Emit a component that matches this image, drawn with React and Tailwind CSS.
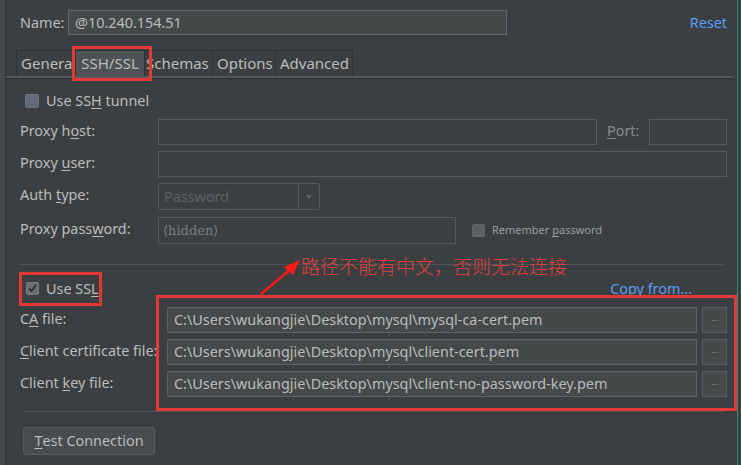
import React from "react";

const font = { fontFamily: '"Noto Sans", "Noto Sans CJK SC", sans-serif' };

const Label = ({ children, w = "w-[138px]" }) => (
  <div className={`${w} shrink-0 text-[14.4px] text-[#bbbbbb] leading-none -mt-[2px]`}>{children}</div>
);

const U = ({ children }) => <span className="underline underline-offset-2">{children}</span>;

const Box = ({ className = "", children }) => (
  <div className={`h-[26px] bg-[#45494a] border border-[#5e6163] flex items-center px-[6px] text-[14.4px] text-[#bbbbbb] ${className}`}>
    {children}
  </div>
);

const EmptyField = ({ className = "" }) => (
  <div className={`h-[26px] border border-[#575a5c] ${className}`} />
);

const FileRow = ({ label, path }) => (
  <div className="flex items-center h-[26px] mt-[6px] first:mt-0">
    <Label>{label}</Label>
    <div className="w-[9px] shrink-0" />
    <Box className="w-[530px]">{path}</Box>
    <div className="ml-[5px] w-[25px] h-[26px] bg-[#45494a] border border-[#55585a] flex items-center justify-center text-[9px] text-[#999] pb-[4px]">
      ...
    </div>
  </div>
);

export default function App() {
  return (
    <div className="w-[741px] h-[465px] bg-[#3c3f41] flex overflow-hidden" style={font}>
      <div className="w-[6px] bg-[#46494b] border-r border-[#2f3133]" />
      <div className="relative flex-1 flex flex-col">
        {/* name row */}
        <div className="mt-[10px] h-[25px] flex items-center pl-[14px] pr-[10px]">
          <div className="w-[48px] text-[14.4px] text-[#bbbbbb]">Name:</div>
          <div className="w-[439px] h-[25px] bg-[#45494a] border border-[#646769] flex items-center px-[6px] text-[14.4px] text-[#bbbbbb]">
            @10.240.154.51
          </div>
          <div className="ml-auto text-[14.4px] text-[#589df6]">Reset</div>
        </div>

        {/* tabs */}
        <div className="mt-[15px] flex pl-[10px] h-[26px]">
          {["Genera", "SSH/SSL", "Schemas", "Options", "Advanced"].map((t, i) => (
            <div
              key={t}
              className={`h-[26px] px-[4px] flex items-center text-[15px] text-[#bbbbbb] border-t border-r border-[#2f3234] ${
                i === 0 ? "border-l w-[60px]" : ""
              } ${i === 1 ? "bg-[#4e5254] w-[69px] justify-center" : ""} ${i === 2 ? "w-[68px] pl-[1px]" : ""} ${
                i === 3 ? "w-[63px]" : ""
              } ${i === 4 ? "w-[77px]" : ""}`}
            >
              {t}
            </div>
          ))}
        </div>
        <div className="h-[2px] bg-[#55585a] mr-[4px]" />
        <div className="h-[1px] bg-[#2c2e30] mr-[4px]" />

        {/* ssh tunnel */}
        <div className="mt-[14px] flex items-center pl-[19px] h-[15px]">
          <div className="w-[14px] h-[14px] rounded-[2px] bg-[#5f6b7a] border border-[#6c737b]" />
          <span className="ml-[7px] text-[14.4px] text-[#bbbbbb]">
            Use SS<U>H</U> tunnel
          </span>
        </div>

        <div className="pl-[14px] pr-[10px]">
          <div className="mt-[11px] flex items-center h-[26px]">
            <Label>
              Proxy h<U>o</U>st:
            </Label>
            <EmptyField className="w-[439px]" />
            <div className="ml-[10px] w-[42px] text-[14.4px] text-[#888b8d] -mt-[2px]">
              <U>P</U>ort:
            </div>
            <EmptyField className="w-[78px]" />
          </div>
          <div className="mt-[6px] flex items-center h-[26px]">
            <Label>
              Proxy <U>u</U>ser:
            </Label>
            <EmptyField className="w-[569px]" />
          </div>
          <div className="mt-[6px] flex items-center h-[27px]">
            <Label>
              Auth <U>t</U>ype:
            </Label>
            <div className="w-[162px] h-[27px] rounded-[3px] border border-[#56595b] flex items-center">
              <div className="flex-1 px-[5px] text-[14.4px] text-[#5c5f61]">Password</div>
              <div className="w-[21px] h-full border-l border-[#56595b] flex items-center justify-center">
                <div className="w-0 h-0 border-l-[3px] border-r-[3px] border-t-[4px] border-l-transparent border-r-transparent border-t-[#5f6264]" />
              </div>
            </div>
          </div>
          <div className="mt-[7px] flex items-center h-[27px]">
            <Label>
              Proxy pass<U>w</U>ord:
            </Label>
            <div
              className="w-[298px] h-[27px] border border-[#56595b] flex items-center px-[4px] text-[13px] text-[#7b7e80]"
              style={{ fontFamily: '"DejaVu Serif", serif' }}
            >
              ⟨hidden⟩
            </div>
            <div className="ml-[16px] w-[13px] h-[13px] rounded-[2px] bg-[#5d6062] border border-[#646769]" />
            <div className="ml-[7px] text-[11px] text-[#9a9d9f]">
              Remember <U>p</U>assword
            </div>
          </div>
        </div>

        {/* separator */}
        <div className="mt-[20px] ml-[13px] mr-[14px] h-[1px] bg-[#505355]" />

        {/* ssl */}
        <div className="mt-[16px] flex items-center pl-[20px] pr-[45px] h-[15px]">
          <div className="w-[13px] h-[13px] rounded-[2px] bg-[#6b6e70] border border-[#7a7d7f] flex items-center justify-center">
            <svg width="11" height="11" viewBox="0 0 11 11">
              <path d="M2 5.5 L4.5 8 L9 2" stroke="#2c2e30" strokeWidth="1.8" fill="none" />
            </svg>
          </div>
          <span className="ml-[7px] text-[14.4px] text-[#bbbbbb]">
            Use SS<U>L</U>
          </span>
          <span className="ml-auto text-[14.4px] text-[#589df6]">Copy from...</span>
        </div>

        <div className="mt-[11px] pl-[14px] flex flex-col">
          <FileRow
            label={
              <>
                C<U>A</U> file:
              </>
            }
            path="C:\Users\wukangjie\Desktop\mysql\mysql-ca-cert.pem"
          />
          <FileRow
            label={
              <>
                <U>C</U>lient certificate file:
              </>
            }
            path="C:\Users\wukangjie\Desktop\mysql\client-cert.pem"
          />
          <FileRow
            label={
              <>
                Client <U>k</U>ey file:
              </>
            }
            path="C:\Users\wukangjie\Desktop\mysql\client-no-password-key.pem"
          />
        </div>

        <div className="mt-[14px] ml-[18px] mr-[12px] h-[1px] bg-[#505355]" />

        <div className="mt-[15px] pl-[17px]">
          <div className="w-[132px] h-[28px] rounded-[3px] bg-[#484c4e] border border-[#5a5d5f] flex items-center justify-center text-[14.4px] text-[#bbbbbb]">
            <U>T</U>est Connection
          </div>
        </div>

        {/* annotations */}
        <div className="absolute left-[66px] top-[46px] w-[80px] h-[35px] border-[3px] border-[#e53935]" />
        <div className="absolute left-[13px] top-[272px] w-[83px] h-[34px] border-[3px] border-[#e53935]" />
        <div className="absolute left-[150px] top-[295px] w-[581px] h-[116px] border-[3px] border-[#e53935]" />
        <svg className="absolute left-[250px] top-[255px]" width="50" height="42" viewBox="0 0 50 42">
          <path d="M5 39 L36 13" stroke="#ff1a1a" strokeWidth="2.5" />
          <path d="M44 5 L28 12 L37 20 Z" fill="#ff1a1a" />
        </svg>
        <div
          className="absolute left-[295px] top-[256px] text-[19px] text-[#e53e3e] leading-none"
          style={{ fontFamily: '"Noto Sans CJK SC", sans-serif', fontWeight: 300 }}
        >
          路径不能有中文，否则无法连接
        </div>
      </div>
      <div className="w-[4px] bg-[#3c3f41] border-l border-[#2d8c78]" />
    </div>
  );
}
